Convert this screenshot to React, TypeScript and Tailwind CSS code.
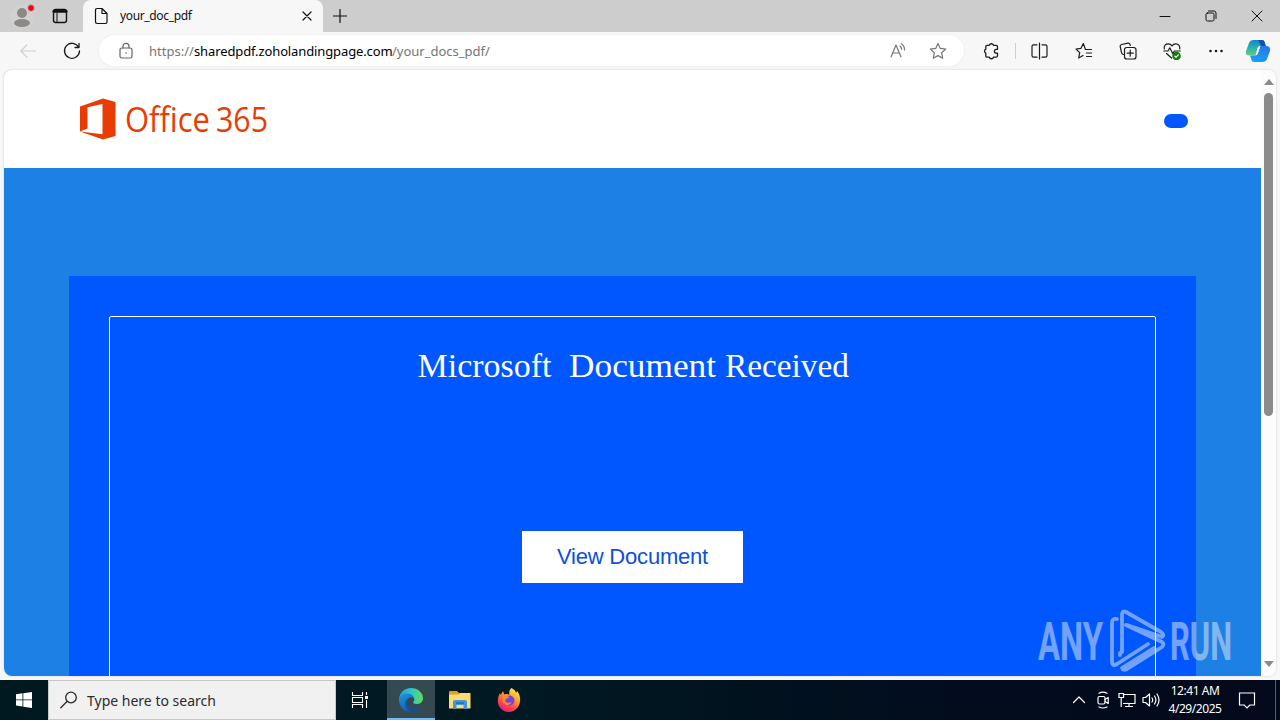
import React from 'react'

const iconProps = {
  fill: 'none',
  stroke: 'currentColor',
  strokeWidth: 1.2,
  strokeLinecap: 'round' as const,
  strokeLinejoin: 'round' as const,
}

function Icon({ size = 18, children }: { size?: number; children: React.ReactNode }) {
  return (
    <svg width={size} height={size} viewBox={`0 0 ${size} ${size}`} {...iconProps}>
      {children}
    </svg>
  )
}

function TabBar() {
  return (
    <div className="flex h-8 bg-[#cdcdcd] text-[#111]">
      <div className="flex w-[83px] items-center rounded-br-md bg-[#cecece]">
        <div className="flex w-11 justify-center">
          <svg width="26" height="26" viewBox="0 0 26 26">
            <circle cx="13" cy="14" r="12" fill="#d3d1d0" />
            <circle cx="13" cy="10" r="5" fill="#8b8886" />
            <ellipse cx="13" cy="20" rx="8" ry="4" fill="#8b8886" />
            <circle cx="22" cy="5" r="3.4" fill="#e00b1c" stroke="#d5cccc" strokeWidth="0.8" />
          </svg>
        </div>
        <div className="flex w-8 justify-center">
          <Icon size={16}>
            <rect x="1.5" y="1.5" width="13" height="13" rx="2.2" strokeWidth="1.4" />
            <path d="M2 3.2h12" strokeWidth="3" />
            <path d="M5 5v9" strokeWidth="1" />
          </Icon>
        </div>
      </div>
      <div className="flex w-[240px] items-center rounded-t-lg bg-[#f7f7f7]">
        <div className="flex w-9 justify-center">
          <Icon size={18}>
            <path d="M3.5 3.2q0-1.700 1.700-1.700H10l5 5v8.300q0 1.700-1.700 1.700H5.200q-1.700 0-1.700-1.700zM10 1.500v5h5" />
          </Icon>
        </div>
        <span className="w-[172px] pl-px text-xs tracking-[-0.35px]">your_doc_pdf</span>
        <div className="flex w-8 justify-center">
          <Icon size={12}><path d="M2 2l8 8M10 2l-8 8" /></Icon>
        </div>
      </div>
      <div className="flex w-[34px] items-center justify-center rounded-bl-md">
        <Icon size={14}><path d="M7 .5v13M.5 7h13" /></Icon>
      </div>
      <div className="ml-auto flex items-center">
        <div className="flex w-[46px] justify-center">
          <Icon size={12}><path d="M1 6.500h10" strokeWidth="1" /></Icon>
        </div>
        <div className="flex w-[46px] justify-center">
          <Icon size={12}>
            <rect x="1" y="3" width="8" height="8" rx="1.5" strokeWidth="1" />
            <path d="M3.500 1H9q2 0 2 2v5.500" strokeWidth="1" />
          </Icon>
        </div>
        <div className="flex w-[46px] justify-center">
          <Icon size={12}><path d="M1 1l10 10M11 1L1 11" strokeWidth="1" /></Icon>
        </div>
      </div>
    </div>
  )
}

function Cell({ children }: { children: React.ReactNode }) {
  return <div className="flex w-11 shrink-0 items-center justify-center">{children}</div>
}

function Toolbar() {
  return (
    <div className="flex h-[37px] items-center bg-[#f7f7f7] pl-1.5 text-[#1b1b1b]">
      <div className="text-[#cfcfcf]">
        <Cell><Icon><path d="M16.5 9H2M8 2.8L1.8 9 8 15.2" /></Icon></Cell>
      </div>
      <Cell><Icon><path d="M15.500 5A7.500 7.500 0 1 0 16.500 9M16 1.500v4h-4" strokeWidth="1.3" /></Icon></Cell>
      <div className="ml-[5px] flex h-[31px] w-[865px] items-center rounded-full bg-white pl-[18px] shadow-[0_0_2px_#e4e4e4]">
        <div className="text-[#666]">
          <Icon>
            <rect x="3" y="6" width="12" height="10" rx="1.8" />
            <path d="M6 6V4.3a3 3 0 0 1 6 0V6" />
            <circle cx="9" cy="11" r=".8" fill="currentColor" stroke="none" />
          </Icon>
        </div>
        <span className="ml-[14px] flex whitespace-nowrap pt-0.5 text-[13px] text-[#757575]">
          <span className="w-[45px]">https://</span>
          <span className="w-[198px] tracking-[-0.12px] text-black">sharedpdf.zoholandingpage.com</span>
          <span>/your_docs_pdf/</span>
        </span>
        <div className="ml-auto flex pr-[6px] text-[#757575]">
          <div className="flex w-10 justify-center">
            <Icon>
              <path d="M2 15L7 3l5 12M3.700 11h6.600M11 4q1.600 1.200 1.600 3.200M12.300 1.800Q15.700 4 15.500 8" />
            </Icon>
          </div>
          <div className="flex w-10 justify-center">
            <Icon><path d="M9 1.500l2.300 4.900 5.400.7-4 3.700 1 5.400L9 13.600l-4.700 2.600 1-5.400-4-3.700 5.400-.7z" /></Icon>
          </div>
        </div>
      </div>
      <div className="ml-[5px] flex">
        <Cell>
          <Icon>
            <path d="M5 3.300h2.300a2.200 2.200 0 0 1 4.200 0H14q1.500 0 1.500 1.500v2.500h-1.200a1.900 1.900 0 0 0 0 3.800h1.200v2.600q0 1.500-1.500 1.500h-2.500a2.200 2.200 0 0 1-4.200 0H5q-1.200 0-1.200-1.200v-2.800a2.200 2.200 0 0 1 0-4V4.500q0-1.200 1.200-1.200z" strokeWidth="1.3" />
          </Icon>
        </Cell>
      </div>
      <div className="mx-[2px] h-4 w-px bg-[#cfcfcf]" />
      <Cell>
        <Icon>
          <path d="M8.500 1v16M6 2.800H2.700q-1.700 0-1.700 1.700v9q0 1.700 1.700 1.700H6M11 2.800h3.300q1.700 0 1.700 1.700v9q0 1.700-1.700 1.700H11" />
        </Icon>
      </Cell>
      <Cell>
        <Icon>
          <path d="M16.500 7.500h-6l-2.200-6-2.300 4.800-5 .7 3.700 3.700-1 5.300L8 13.500M11.500 11h5M11.500 14.500h5" />
        </Icon>
      </Cell>
      <Cell>
        <Icon>
          <path d="M4.500 12.500q-1.500 0-1.900-1.600L1.200 4.500q-.3-1.600 1.300-2L9 1.200q1.500-.3 2 1.200l.3 1.100" />
          <rect x="5.500" y="5.500" width="11.500" height="11.500" rx="2.3" />
          <path d="M11.200 8.200v6M8.200 11.200h6" />
        </Icon>
      </Cell>
      <Cell>
        <Icon>
          <path d="M1.300 7C.5 3.500 3 1.800 5.200 1.800 7 1.800 8.300 2.800 9 4c.7-1.200 2-2.200 3.800-2.200 2.700 0 4.600 2.400 3.900 5.200M.8 9H5l1.800-3.200 3 6L11.400 9h5.800M3.500 11.500L8.500 16" />
          <circle cx="13.500" cy="14" r="4.3" fill="#107c10" stroke="none" />
          <path d="M11.800 14.200l1.200 1.200 2.300-2.600" stroke="#fff" />
        </Icon>
      </Cell>
      <Cell>
        <Icon>
          <g fill="currentColor" stroke="none">
            <circle cx="3.500" cy="9" r="1.3" />
            <circle cx="9" cy="9" r="1.3" />
            <circle cx="14.500" cy="9" r="1.3" />
          </g>
        </Icon>
      </Cell>
      <svg width="26" height="24" viewBox="0 0 26 24" className="ml-[7px]">
        <defs>
          <linearGradient id="cpl" x1="0.3" y1="0" x2="0.2" y2="1">
            <stop offset="0" stopColor="#1586c8" />
            <stop offset="0.55" stopColor="#27b7b0" />
            <stop offset="1" stopColor="#69cf72" />
          </linearGradient>
          <linearGradient id="cpr" x1="0.6" y1="0" x2="0.3" y2="1">
            <stop offset="0" stopColor="#2876e8" />
            <stop offset="1" stopColor="#16a2f6" />
          </linearGradient>
        </defs>
        <path d="M9 1h8q2 0 2.600 2l1 4h-4q-2.500 0-3.300 2.300L11 16.500H4.500Q0 16.500 1 12L4 4q1-3 5-3z" fill="url(#cpl)" />
        <path d="M13 1h4q2 0 2.600 2l1.200 4h-4.500z" fill="#1750b5" />
        <path d="M17 23H9q-2 0-2.600-2l-1.200-4.500h4.500q2.300 0 3.200-2.500L15.500 7H21q5 0 4 5l-3 8q-1 3-5 3z" fill="url(#cpr)" />
        <path d="M12.600 8.800q.5-1.800 2.400-1.800l-2 7.300q-.7 2-2.500 2z" fill="#fff" />
      </svg>
    </div>
  )
}

function OfficeLogo() {
  return (
    <svg width="200" height="60" viewBox="0 -8 200 60">
      <path d="M1 9.500L24 1.500l12.500 3.500v34L24 42.500 1 34.500l22.500 2.700V7L8.500 10.300v21.200L1 34.500z" fill="#e93c03" />
      <g fill="#e93c03" fontSize="34" className="font-['Open_Sans',sans-serif]">
        <text x="46" y="35" textLength="85" lengthAdjust="spacingAndGlyphs">Office</text>
        <text x="137" y="35" textLength="52" lengthAdjust="spacingAndGlyphs">365</text>
      </g>
    </svg>
  )
}

function Page() {
  return (
    <div className="mx-1 mt-px flex h-[606px] overflow-hidden rounded-lg bg-white shadow-[0_0_2px_#c4c4c4]">
      <div className="flex w-[1257px] flex-col">
        <header className="flex h-[98px] shrink-0 items-center justify-between pl-[75px] pr-[73px]">
          <OfficeLogo />
          <div className="mt-1 h-[14px] w-6 rounded-full bg-[#0057ff]" />
        </header>
        <main className="flex-1 overflow-hidden bg-[#1d80e4] px-[65px] pt-[108px]">
          <div className="h-[600px] bg-[#0057ff] p-10">
            <div className="flex h-full flex-col items-center rounded-[2px] border border-white">
              <h1 className="mt-[26px] font-['Liberation_Serif',serif] text-[34px] leading-[46px]">
                <svg width="434" height="46" viewBox="0 0 434 46" fill="#fff">
                  <text x="1.5" y="34" textLength="134" lengthAdjust="spacingAndGlyphs">Microsoft</text>
                  <text x="153" y="34" textLength="147" lengthAdjust="spacingAndGlyphs">Document</text>
                  <text x="309" y="34" textLength="124" lengthAdjust="spacingAndGlyphs">Received</text>
                </svg>
              </h1>
              <button className="mt-[142px] h-[52px] w-[221px] bg-white pb-[2px] font-['Liberation_Sans',sans-serif] text-[22px] tracking-[-0.2px] text-[#0b4fe0]">
                View Document
              </button>
            </div>
          </div>
        </main>
      </div>
      <div className="flex w-[15px] flex-col items-center bg-[#fcfcfc] pt-[9px] pb-[9px]">
        <div className="border-x-[5px] border-b-[6px] border-x-transparent border-b-[#8a8a8a]" />
        <div className="mt-2 h-[323px] w-[9px] rounded-full bg-[#8b8b8b]" />
        <div className="mt-auto border-x-[5px] border-t-[6px] border-x-transparent border-t-[#8a8a8a]" />
      </div>
    </div>
  )
}

function Watermark() {
  return (
    <svg width="220" height="90" viewBox="0 -10 220 90" className="absolute left-[1035px] top-[597px] opacity-50">
      <g fill="#e4ecf8" fontSize="53" className="font-['Roboto',sans-serif] font-bold">
        <text x="3" y="53" textLength="65" lengthAdjust="spacingAndGlyphs">ANY</text>
        <text x="135" y="53" textLength="62" lengthAdjust="spacingAndGlyphs">RUN</text>
      </g>
      <path
        d="M82 12q-5-1-5 4v38q0 6 5 3l31-20M87 45V8q0-5 4-3l35 20q4 3 1 5L92 18M85 48l0-2M91 18l36 17q3 2 0 5L92 62q-4 2-5-1l32-20"
        fill="none"
        stroke="#e4ecf8"
        strokeWidth="3.8"
        strokeLinecap="round"
        strokeLinejoin="round"
      />
    </svg>
  )
}

function EdgeLogo() {
  return (
    <svg width="26" height="26" viewBox="0 0 26 26">
      <defs>
        <linearGradient id="edgeTop" x1="0" y1="0.5" x2="1" y2="0.5">
          <stop offset="0" stopColor="#239bdc" />
          <stop offset="0.5" stopColor="#32c6c7" />
          <stop offset="1" stopColor="#63dc58" />
        </linearGradient>
        <linearGradient id="edgeBottom" x1="0" y1="0" x2="0.6" y2="1">
          <stop offset="0" stopColor="#1d96e0" />
          <stop offset="1" stopColor="#1259b0" />
        </linearGradient>
      </defs>
      <path d="M1 12C2 4.500 7 1 13 1c7 0 12 5 12 10 0 4-3 6-6.500 6-3 0-4-1-3-2.200 2-2.500.5-5.800-4.500-5.800-5 0-9 2.500-10 7z" fill="url(#edgeTop)" />
      <path d="M1 12c1-4 5-5.500 8-5.500 4 0 6.500 2 7 4.500-3-2-7 0-7 4 0 5 6 8 13.500 4.500C20 23 17 25 13 25 6 25 .5 19 1 12z" fill="url(#edgeBottom)" />
      <path d="M11.500 10.500C8.500 12 8.500 17 12 19.500c3 2 7 1.800 10.500 0C20 23 17 25 13 25 7 23.500 5 13 11.500 10.500z" fill="#174e91" />
    </svg>
  )
}

function FolderLogo() {
  return (
    <svg width="24" height="20" viewBox="0 0 24 20">
      <path d="M1 2q0-1 1-1h7l2 2h11v15H1z" fill="#e5a018" />
      <path d="M1 4.500h10l1-1.500h10.500v15.500H1z" fill="#ffdc72" />
      <path d="M5 19v-7q0-2 2-2h10q2 0 2 2v7h-3.500v-4h-7v4z" fill="#4398d8" />
      <path d="M8 12h8v2H8z" fill="#2677b8" />
    </svg>
  )
}

function FirefoxLogo() {
  return (
    <svg width="24" height="26" viewBox="0 0 24 26">
      <defs>
        <linearGradient id="fox" x1="0.8" y1="0" x2="0.25" y2="1">
          <stop offset="0" stopColor="#fff44f" />
          <stop offset="0.4" stopColor="#ff9a26" />
          <stop offset="0.7" stopColor="#ff4547" />
          <stop offset="1" stopColor="#e31587" />
        </linearGradient>
      </defs>
      <path d="M14.500 1c3 1.500 4 3 4.500 5l1.200-2C22.500 7 23.500 10.500 23 14.500 22.300 20.500 17.500 25 12 25 5.500 25 .8 20 .8 14c0-3 .9-6 2.200-8l.7 2L6 4l1.300 3.500c2-.7 3.700-.4 5 .3C12 5 12.500 2.500 14.500 1z" fill="url(#fox)" />
      <circle cx="12.500" cy="13.500" r="5" fill="#7542e5" />
      <path d="M5 9.500c3-2 6-1 7.500 1-3 .3-3 1.500-4.500 2.500.5 3 4.500 3.500 6.500 2-1 4-7.500 4-9-.5z" fill="#ff8a2a" />
    </svg>
  )
}

function Taskbar() {
  return (
    <div className="flex h-10 bg-[linear-gradient(90deg,#001820_0%,#001922_40%,#020c1c_75%,#020a1b_100%)] text-white">
      <div className="flex w-12 items-center justify-center">
        <svg width="16" height="16" viewBox="0 0 16 16" fill="#fff">
          <path d="M0 2.200L6.500 1.300v6.200H0zM7.300 1.200L16 0v7.500H7.300zM0 8.300h6.500v6.200L0 13.600zM7.300 8.300H16V16l-8.700-1.200z" />
        </svg>
      </div>
      <div className="flex w-[288px] items-center border border-[#c9c9c9] bg-[#f1f1f1] pl-[11px] text-[#2b2b2b]">
        <Icon>
          <circle cx="11" cy="6.500" r="5.300" strokeWidth="1.300" />
          <path d="M7 10.500L.8 16.700" strokeWidth="1.300" />
        </Icon>
        <span className="ml-[9px] pt-0.5 text-sm">Type here to search</span>
      </div>
      <div className="flex w-12 items-center justify-center">
        <svg width="18" height="18" viewBox="0 0 18 18" fill="none" stroke="#fff" strokeWidth="1.100">
          <path d="M1.500 1v3.500h10V1M1.500 17v-3.500h10V17M1.500 6.500h10v5h-10zM15.500 1v3M15.500 9v8" />
          <path d="M14 5h3v3h-3z" fill="#fff" stroke="none" />
        </svg>
      </div>
      <div className="ml-[3px] flex w-12 items-center justify-center border-b-2 border-[#76b9ed] bg-[#344950] pt-0.5">
        <EdgeLogo />
      </div>
      <div className="flex w-[50px] items-center justify-center"><FolderLogo /></div>
      <div className="flex w-12 items-center justify-center"><FirefoxLogo /></div>
      <div className="ml-auto flex items-center">
        <div className="flex w-6 justify-center">
          <Icon size={14}><path d="M1.500 9.500L7 4l5.500 5.500" /></Icon>
        </div>
        <div className="flex w-6 justify-center">
          <Icon>
            <rect x="4" y="5.500" width="7" height="7.500" rx="1.500" />
            <path d="M11 8.500l3.200-2v6l-3.200-2M5 2.300q4-2.400 8 0M5 16q4 2 8 0" />
          </Icon>
        </div>
        <div className="flex w-6 justify-center">
          <Icon>
            <path d="M5.500 3.500H17v9H5.500M11 12.500v3M7.500 15.500h7M1 2.500h4.500v4H1zM3.200 6.500v9" strokeLinejoin="miter" />
          </Icon>
        </div>
        <div className="flex w-6 justify-center">
          <Icon>
            <path d="M1 6.500h2.500L7.500 3v12l-4-3.500H1zM10 7q1.400 2 0 4M12.500 5q2.800 4 0 8M15 3q4 6 0 12" />
          </Icon>
        </div>
        <div className="ml-[2px] flex w-[60px] flex-col items-center text-xs leading-[18px] tracking-[-0.45px]">
          <span>12:41 AM</span>
          <span>4/29/2025</span>
        </div>
        <div className="ml-[7px] flex w-[30px] justify-center">
          <Icon><path d="M1.500 2h15v12h-4.700L9 16.800 6.200 14H1.500z" strokeLinejoin="miter" /></Icon>
        </div>
        <div className="ml-[13px] mr-1 h-10 w-px bg-[#53606b]" />
      </div>
    </div>
  )
}

export default function App() {
  return (
    <div className="relative flex h-[720px] w-[1280px] flex-col overflow-hidden bg-[#f7f7f7] font-['Noto_Sans','Open_Sans',sans-serif]">
      <TabBar />
      <Toolbar />
      <Page />
      <div className="h-1" />
      <Taskbar />
      <Watermark />
    </div>
  )
}
